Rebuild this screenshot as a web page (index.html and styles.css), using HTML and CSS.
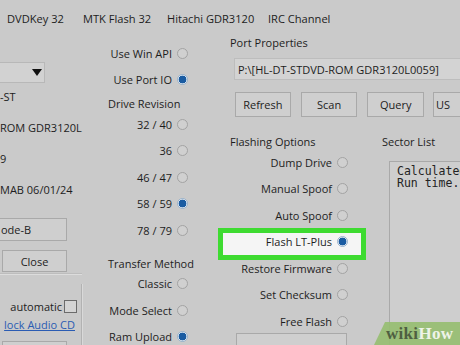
FILE: index.html
```html
<!DOCTYPE html>
<html>
<head>
<meta charset="utf-8">
<link rel="stylesheet" href="styles.css">
</head>
<body>
<div class="screen">
  <div class="tabs">
    <span>DVDKey 32</span>
    <span>MTK Flash 32</span>
    <span>Hitachi GDR3120</span>
    <span>IRC Channel</span>
  </div>
  <div class="main">
    <div class="left">
      <div class="combo"><span class="arrow"></span></div>
      <div class="info">
        <div>-ST</div>
        <div>ROM GDR3120L</div>
        <div>9</div>
        <div>MAB 06/01/24</div>
      </div>
      <div class="btn btn-mode">ode-B</div>
      <div class="btn btn-close">Close</div>
      <div class="sep"></div>
      <div class="grp">
        <div class="chkrow">automatic<span class="chk"></span></div>
        <div class="link">lock Audio CD</div>
        <div class="btn btn-small"></div>
      </div>
    </div>
    <div class="mid">
      <div class="r">Use Win API<span class="radio"></span></div>
      <div class="r">Use Port IO<span class="radio on"></span></div>
      <div class="lbl lbl-drive">Drive Revision</div>
      <div class="r">32 / 40<span class="radio"></span></div>
      <div class="r">36<span class="radio"></span></div>
      <div class="r">46 / 47<span class="radio"></span></div>
      <div class="r">58 / 59<span class="radio on"></span></div>
      <div class="r">78 / 79<span class="radio"></span></div>
      <div class="lbl lbl-transfer">Transfer Method</div>
      <div class="r">Classic<span class="radio"></span></div>
      <div class="r">Mode Select<span class="radio"></span></div>
      <div class="r">Ram Upload<span class="radio on"></span></div>
    </div>
    <div class="right">
      <div class="lbl">Port Properties</div>
      <div class="field">P:\[HL-DT-STDVD-ROM GDR3120L0059]</div>
      <div class="btns">
        <div class="btn b-refresh">Refresh</div>
        <div class="btn b-scan">Scan</div>
        <div class="btn b-query">Query</div>
        <div class="btn b-us">US</div>
      </div>
      <div class="lower">
        <div class="flash">
          <div class="lbl">Flashing Options</div>
          <div class="r">Dump Drive<span class="radio"></span></div>
          <div class="r">Manual Spoof<span class="radio"></span></div>
          <div class="r">Auto Spoof<span class="radio"></span></div>
          <div class="r hl">Flash LT-Plus<span class="radio on"></span></div>
          <div class="r">Restore Firmware<span class="radio"></span></div>
          <div class="r">Set Checksum<span class="radio"></span></div>
          <div class="r">Free Flash<span class="radio"></span></div>
          <div class="btn btn-flash"></div>
        </div>
        <div class="sector">
          <div class="lbl">Sector List</div>
          <div class="list"><div>Calculated</div><div>Run time.</div></div>
        </div>
      </div>
    </div>
  </div>
  <div class="wm"><span class="wm-wiki">wiki</span><span class="wm-how">How</span></div>
</div>
</body>
</html>
```
FILE: styles.css
```css
* { box-sizing: border-box; margin: 0; padding: 0; }
html, body { width: 460px; height: 345px; overflow: hidden; }
body {
  background: #cacaca;
  font-family: "Open Sans", "Noto Sans", sans-serif;
  font-size: 11px;
  color: #1d1d1d;
}
.screen { position: relative; width: 460px; height: 345px; overflow: hidden; }

.tabs {
  display: grid;
  grid-template-columns: 76px 84px 101px max-content;
  height: 36px;
  align-items: center;
  padding-left: 7px;
  white-space: nowrap;
  font-size: 11.1px;
}

.main { display: grid; grid-template-columns: 82px 148px 280px; height: 309px; }

/* left column */
.left { display: flex; flex-direction: column; }
.combo {
  margin-top: 26px; margin-left: -40px; width: 85px; height: 21px;
  background: #d2d2d2; border: 1px solid #b8b8b8;
  display: flex; justify-content: flex-end; align-items: center; padding-right: 2px;
}
.arrow {
  width: 0; height: 0;
  border-left: 5px solid transparent; border-right: 5px solid transparent;
  border-top: 7px solid #111;
}
.info { margin-top: -2px; }
.info div { height: 31px; line-height: 31px; white-space: nowrap; }

.btn {
  background: #cfcfcf; border: 1px solid #a9a9a9;
  display: flex; align-items: center; justify-content: center;
  white-space: nowrap;
}
.btn-mode { margin-top: 13px; margin-left: -30px; width: 97px; height: 23px; justify-content: flex-start; padding-left: 30px; }
.btn-close { margin-top: 9px; margin-left: 2px; width: 65px; height: 22px; }
.sep { margin-top: 1px; height: 2px; border-top: 1px solid #bdbdbd; border-bottom: 1px solid #dcdcdc; }
.grp {
  margin-top: 9px; flex: 1;
  border-right: 1px solid #b2b2b2; box-shadow: 1px 0 0 #d9d9d9;
  padding-top: 15px; display: flex; flex-direction: column; align-items: flex-end;
}
.chkrow { height: 14px; display: flex; align-items: center; gap: 2px; padding-right: 4px; white-space: nowrap; }
.chk { width: 13px; height: 13px; border: 1px solid #6b6b6b; background: #d4d4d4; }
.link {
  margin-top: 5px; height: 14px; line-height: 14px; padding-right: 6px;
  color: #2a5cb3; text-decoration: underline; white-space: nowrap;
}
.btn-small { margin-top: 9px; align-self: flex-start; margin-left: 2px; width: 65px; height: 22px; }

/* middle column */
.mid { padding: 4px 42px 0 26px; display: flex; flex-direction: column; }
.r {
  height: 26.5px; display: flex; justify-content: flex-end; align-items: center;
  gap: 5px; white-space: nowrap;
}
.lbl { height: 14px; line-height: 14px; white-space: nowrap; }
.lbl-drive { margin-top: 4px; }
.lbl-transfer { margin-top: 13px; }

.radio {
  width: 11px; height: 11px; border-radius: 50%; flex: none;
  border: 1px solid #a3a3a3; background: #d0d0d0;
}
.radio.on {
  border-color: #98b2cc;
  background: radial-gradient(circle, #1b5ca2 0 3.6px, #e6edf4 4.2px);
}

/* right column */
.right { display: flex; flex-direction: column; }
.field {
  margin-top: 8px; margin-left: 4px; height: 22px; width: 270px;
  background: #d3d3d3; border: 1px solid #bdbdbd;
  display: flex; align-items: center; padding-left: 3px; white-space: nowrap;
}
.btns { margin-top: 12px; margin-left: 5px; display: flex; }
.btns .btn { height: 25px; }
.b-refresh { width: 58px; }
.b-scan { width: 59px; margin-left: 10px; }
.b-query { width: 59px; margin-left: 10px; }
.b-us { width: 80px; margin-left: 9px; justify-content: flex-start; padding-left: 2px; }

.lower { margin-top: 18px; display: grid; grid-template-columns: 152px 1fr; }
.flash { display: flex; flex-direction: column; }
.flash .r { padding-right: 34px; }
.hl { position: relative; z-index: 0; }
.hl::before {
  content: ""; position: absolute; z-index: -1;
  left: -12px; right: 16px; top: -1px; bottom: -5px;
  background: #f5f5f5; border: 5px solid #3edb31;
}
.btn-flash { margin-top: -1.5px; margin-left: 6px; width: 111px; height: 22px; }

.sector { display: flex; flex-direction: column; min-width: 0; }
.list {
  margin-top: 12px; margin-left: 7px; height: 200px; width: 120px;
  background: #cecece; border: 1px solid #a9a9a9;
  padding: 4px 7px; white-space: nowrap;
  font-family: "DejaVu Sans Mono", "Liberation Mono", monospace;
  font-size: 11.5px; color: #222;
}
.list div { height: 11.5px; line-height: 11.5px; }
.list div + div { margin-top: 0; }

/* watermark */
.wm {
  position: absolute; right: 0; bottom: 0; width: 86px; height: 23px;
  background: rgba(150, 190, 112, 0.9);
  clip-path: polygon(11px 0, 100% 0, 100% 100%, 0 100%);
  padding-left: 12px; display: flex; align-items: center;
  font-family: "Liberation Serif", "DejaVu Serif", serif; font-weight: bold;
  font-size: 17px; letter-spacing: 0.3px;
}
.wm-wiki { color: #4f5f41; }
.wm-how { color: #eef3e8; }
```
